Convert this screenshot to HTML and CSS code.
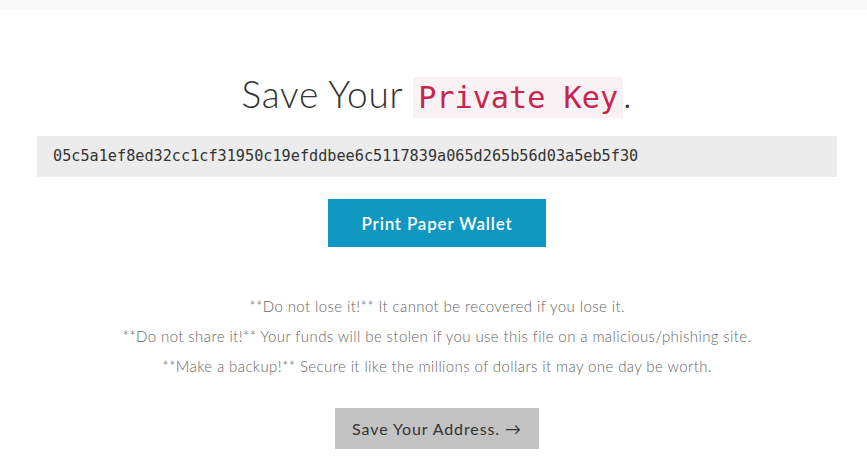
FILE: index.html
```html
<!DOCTYPE html>
<html lang="en">
<head>
    <meta charset="UTF-8">
    <title>Save Your Private Key</title>
    <link rel="stylesheet" href="styles.css">
</head>
<body>
    <div class="topbar"></div>

    <div class="page">
        <h1>Save Your <code>Private Key</code>.</h1>

        <div class="key-box">05c5a1ef8ed32cc1cf31950c19efddbee6c5117839a065d265b56d03a5eb5f30</div>

        <div class="actions">
            <button class="btn btn-primary">Print Paper Wallet</button>
        </div>

        <div class="notes">
            <p>**Do not lose it!** It cannot be recovered if you lose it.</p>
            <p>**Do not share it!** Your funds will be stolen if you use this file on a malicious/phishing site.</p>
            <p>**Make a backup!** Secure it like the millions of dollars it may one day be worth.</p>
        </div>

        <div class="actions">
            <button class="btn btn-default">Save Your Address. &rarr;</button>
        </div>
    </div>
</body>
</html>
```

FILE: styles.css
```css
body {
    margin: 0;
    font-family: Lato, "Open Sans", sans-serif;
    background-color: #fff;
    color: #333;
}
.topbar {
    height: 10px;
    background-color: #f8f8f8;
}
.page {
    width: 800px;
    margin-left: 37px;
    text-align: center;
}
h1 {
    font-size: 37px;
    font-weight: 300;
    letter-spacing: 0.7px;
    line-height: 41px;
    margin: 63px 0 18px;
    color: #333;
}
h1 code {
    display: inline-block;
    font-family: "DejaVu Sans Mono", monospace;
    font-size: 30.2px;
    font-weight: 400;
    letter-spacing: 0;
    line-height: 41px;
    padding: 0 5px;
    color: #c7254e;
    background-color: #f9f2f4;
}
.key-box {
    background-color: #ececec;
    font-family: "DejaVu Sans Mono", monospace;
    font-size: 15.2px;
    line-height: 41px;
    padding: 0 16px;
    text-align: left;
    color: #333;
}
.actions {
    margin-top: 22px;
}
.btn {
    font-family: Lato, sans-serif;
    border: none;
    border-radius: 0;
    cursor: pointer;
}
.btn-primary {
    width: 218px;
    height: 48px;
    font-size: 17px;
    font-weight: 600;
    letter-spacing: 0.8px;
    color: #fff;
    background-color: #0e97c0;
}
.btn-default {
    width: 204px;
    height: 41px;
    font-size: 16px;
    letter-spacing: 0.9px;
    color: #333;
    background-color: #c3c3c3;
}
.notes {
    margin-top: 44px;
    margin-bottom: 27px;
    font-size: 15px;
    font-weight: 300;
    letter-spacing: 0.4px;
    color: #666;
}
.notes p {
    margin: 0;
    line-height: 30px;
}
```
